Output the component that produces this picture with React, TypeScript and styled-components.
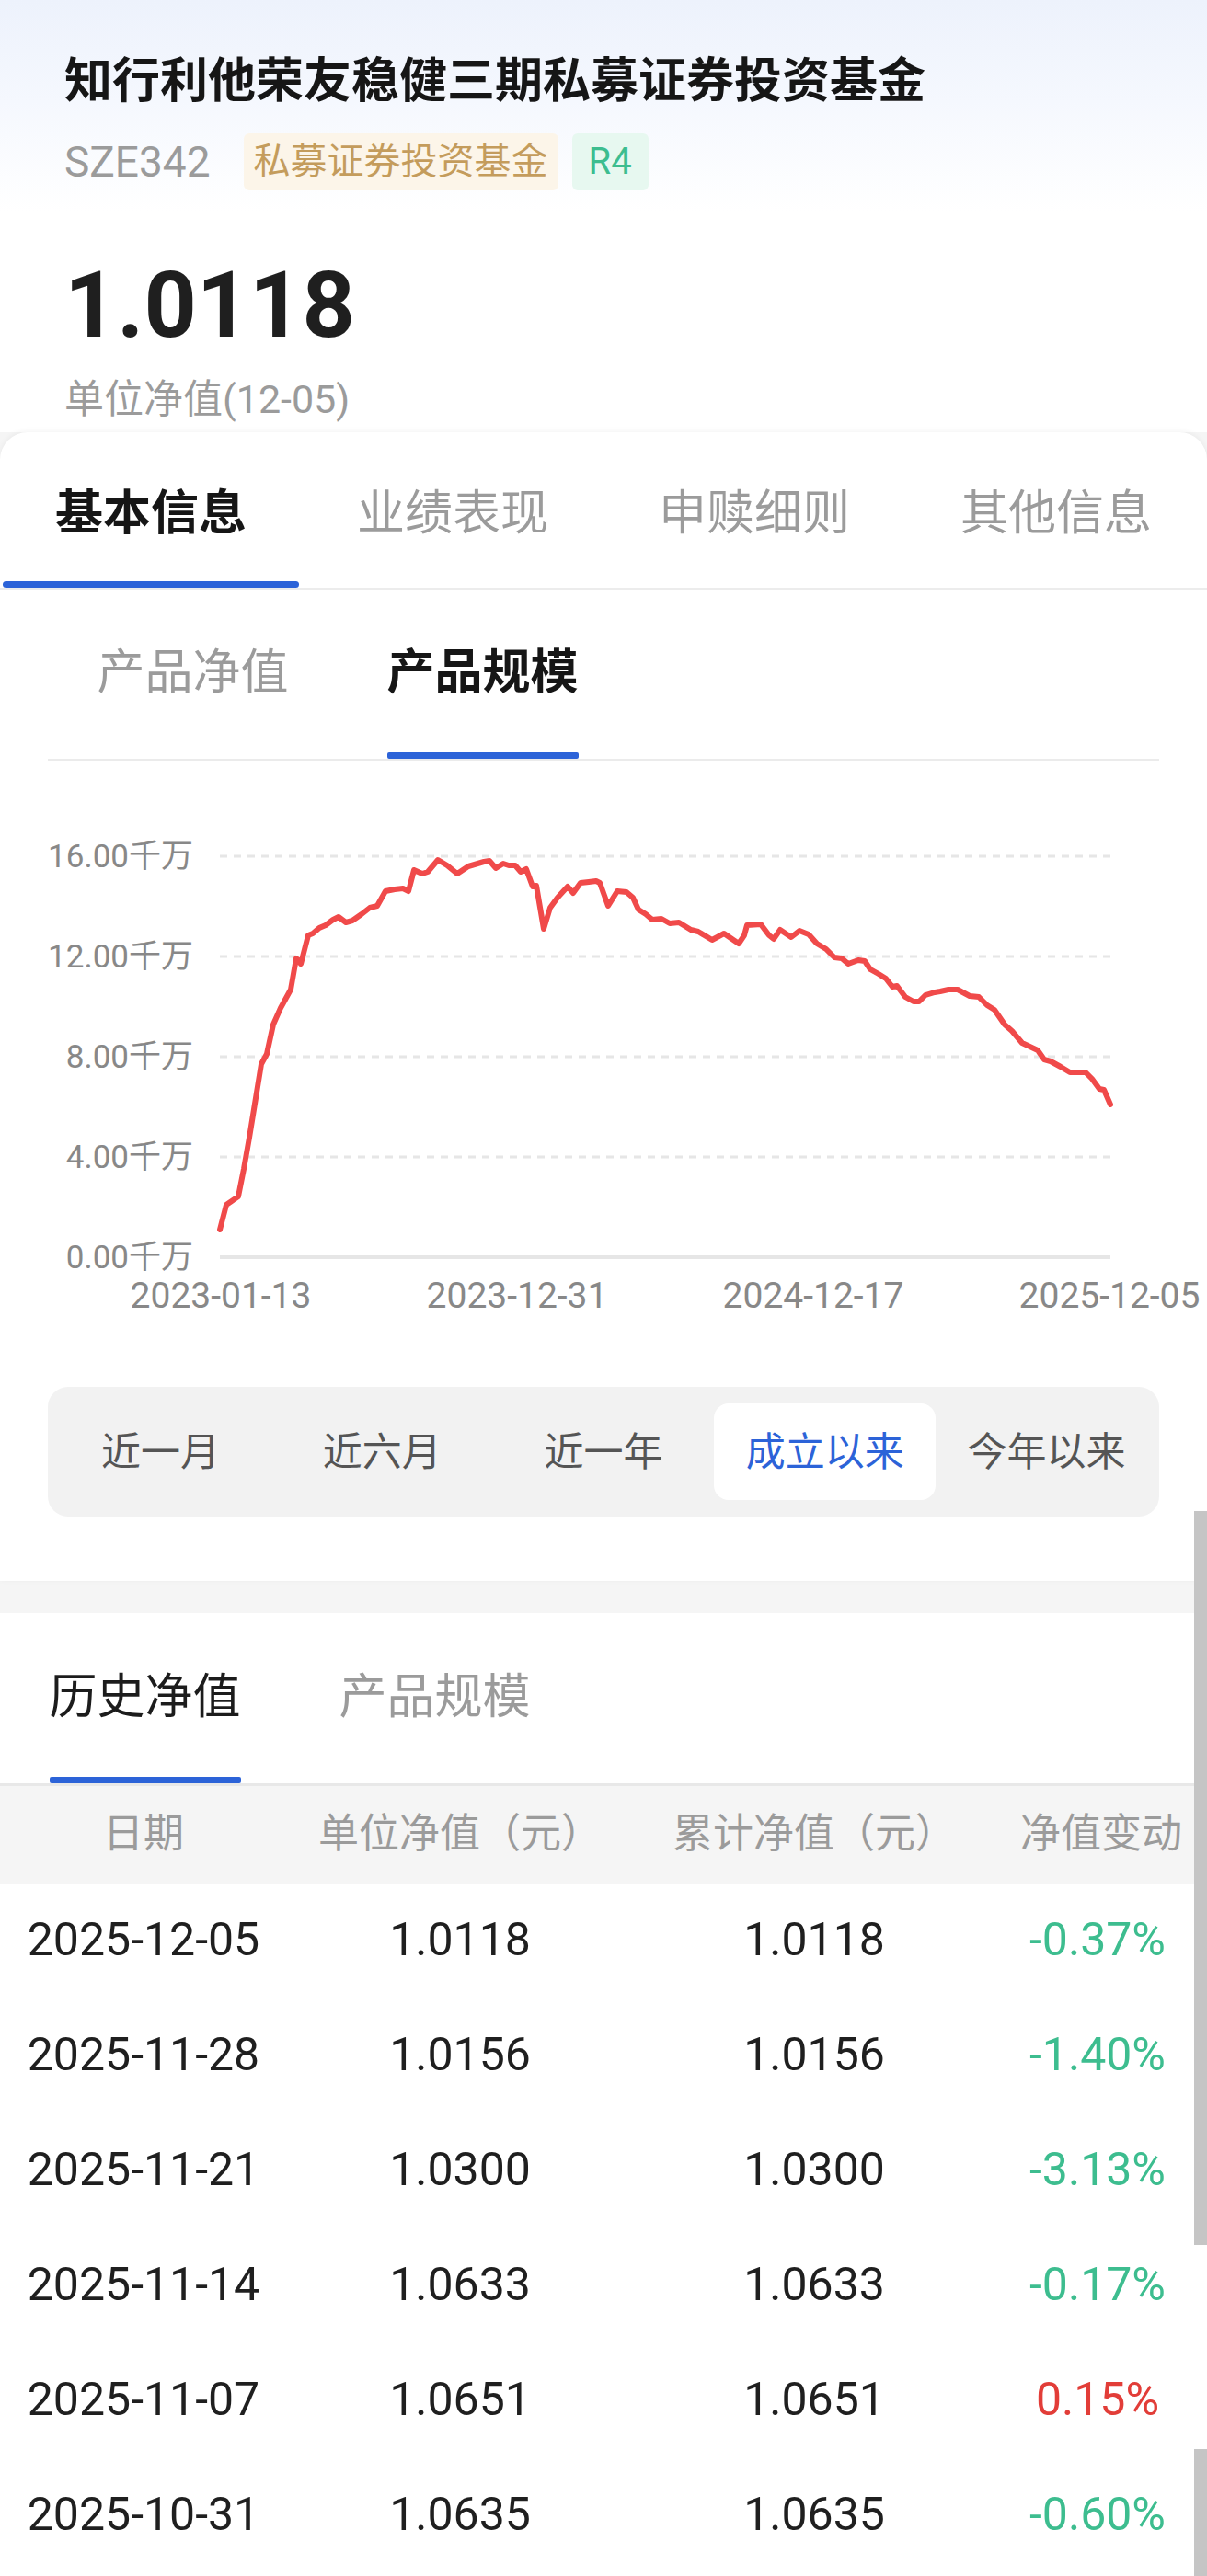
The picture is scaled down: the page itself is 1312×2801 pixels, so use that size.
import React, { FunctionComponent } from 'react';
import styled, { createGlobalStyle } from 'styled-components';

const BLUE = '#2c63d8';

const mainTabs = ['基本信息', '业绩表现', '申赎细则', '其他信息'];
const periods = ['近一月', '近六月', '近一年', '成立以来', '今年以来'];

const history = [
  { date: '2025-12-05', unit: '1.0118', total: '1.0118', change: '-0.37%' },
  { date: '2025-11-28', unit: '1.0156', total: '1.0156', change: '-1.40%' },
  { date: '2025-11-21', unit: '1.0300', total: '1.0300', change: '-3.13%' },
  { date: '2025-11-14', unit: '1.0633', total: '1.0633', change: '-0.17%' },
  { date: '2025-11-07', unit: '1.0651', total: '1.0651', change: '0.15%' },
  { date: '2025-10-31', unit: '1.0635', total: '1.0635', change: '-0.60%' },
];

// chart coords are page pixels, svg viewBox starts at y=827
const line = [
  [239, 1337], [246, 1310], [259, 1301], [265, 1271], [271, 1237], [278, 1194], [284, 1157],
  [290, 1146], [297, 1114], [305, 1096], [316, 1076], [322, 1042], [327, 1048], [335, 1017],
  [340, 1015], [347, 1009], [354, 1006], [362, 1000], [368, 997], [376, 1003], [383, 1001],
  [393, 994], [402, 987], [410, 985], [419, 969], [429, 967], [438, 966], [444, 969],
  [450, 946], [459, 950], [465, 948], [476, 935], [486, 941], [497, 950], [509, 942],
  [526, 937], [532, 936], [539, 944], [547, 939], [553, 941], [560, 941], [566, 948],
  [572, 945], [579, 964], [583, 963], [591, 1010], [598, 987], [606, 976], [617, 964],
  [623, 971], [631, 960], [640, 959], [648, 958], [652, 960], [661, 985], [671, 969],
  [681, 970], [688, 976], [694, 989], [702, 994], [709, 1000], [719, 999], [728, 1004],
  [738, 1003], [751, 1011], [759, 1013], [774, 1022], [787, 1015], [803, 1026], [809, 1017],
  [812, 1006], [827, 1005], [836, 1017], [841, 1021], [848, 1011], [860, 1019], [869, 1012],
  [879, 1016], [888, 1026], [898, 1032], [907, 1041], [915, 1042], [922, 1048], [933, 1044],
  [940, 1045], [946, 1054], [955, 1059], [963, 1064], [970, 1073], [975, 1072], [984, 1084],
  [993, 1089], [999, 1089], [1006, 1082], [1016, 1079], [1022, 1078], [1031, 1076],
  [1041, 1076], [1054, 1083], [1064, 1084], [1073, 1093], [1081, 1098], [1092, 1114],
  [1100, 1121], [1111, 1134], [1128, 1142], [1135, 1152], [1142, 1154], [1153, 1160],
  [1163, 1166], [1170, 1166], [1180, 1166], [1187, 1173], [1195, 1184], [1200, 1185],
  [1207, 1201],
];

const yTicks = [
  { y: 931, label: '16.00千万' },
  { y: 1040, label: '12.00千万' },
  { y: 1149, label: '8.00千万' },
  { y: 1258, label: '4.00千万' },
  { y: 1367, label: '0.00千万' },
];

const xTicks = [
  { x: 240, label: '2023-01-13' },
  { x: 562, label: '2023-12-31' },
  { x: 884, label: '2024-12-17' },
  { x: 1206, label: '2025-12-05' },
];

const ScaleChart: FunctionComponent = () => (
  <ChartSvg width={1312} height={620} viewBox="0 827 1312 620">
    {yTicks.map(t => (
      <g key={t.label}>
        <line
          x1={239}
          x2={1207}
          y1={t.y}
          y2={t.y}
          stroke="#e6e6e6"
          strokeWidth={t.y === 1367 ? 4 : 3}
          strokeDasharray={t.y === 1367 ? undefined : '8 7'}
        />
        <text x={210} y={t.y + 12} textAnchor="end" className="ylabel">
          {t.label}
        </text>
      </g>
    ))}
    {xTicks.map(t => (
      <text key={t.label} x={t.x} y={1422} textAnchor="middle" className="xlabel">
        {t.label}
      </text>
    ))}
    <polyline
      points={line.map(p => p.join(',')).join(' ')}
      fill="none"
      stroke="#f04a4a"
      strokeWidth={6}
      strokeLinejoin="round"
      strokeLinecap="round"
    />
  </ChartSvg>
);

const App: FunctionComponent = () => (
  <Page>
    <GlobalStyle />
    <Header>
      <Title>知行利他荣友稳健三期私募证券投资基金</Title>
      <TagRow>
        <Code>SZE342</Code>
        <Tag $bg="#fcf5e9" $color="#c49c5c" $pad={11}>私募证券投资基金</Tag>
        <Tag $bg="#e7f8f0" $color="#3dbd8f" $pad={18}>R4</Tag>
      </TagRow>
      <NavValue>1.0118</NavValue>
      <NavLabel>单位净值(12-05)</NavLabel>
    </Header>

    <Card>
      <MainTabs>
        {mainTabs.map((t, i) => (
          <MainTab key={t} $active={i === 0}>
            <span>{t}</span>
            <MainBar $active={i === 0} />
          </MainTab>
        ))}
      </MainTabs>

      <SubTabs>
        <SubTab $active={false}>
          <span>产品净值</span>
          <SubBar $active={false} />
        </SubTab>
        <SubTab $active>
          <span>产品规模</span>
          <SubBar $active />
        </SubTab>
      </SubTabs>

      <ScaleChart />

      <PeriodBar>
        {periods.map(p => (
          <PeriodItem key={p} $active={p === '成立以来'}>
            {p}
          </PeriodItem>
        ))}
      </PeriodBar>
    </Card>

    <HistoryCard>
      <HistoryTabs>
        <HistoryTab $active>
          <span>历史净值</span>
          <SubBar $active />
        </HistoryTab>
        <HistoryTab $active={false}>
          <span>产品规模</span>
          <SubBar $active={false} />
        </HistoryTab>
      </HistoryTabs>
      <TableHead>
        <div>日期</div>
        <div>单位净值（元）</div>
        <div>累计净值（元）</div>
        <div>净值变动</div>
      </TableHead>
      {history.map(r => (
        <TableRow key={r.date}>
          <div>{r.date}</div>
          <div>{r.unit}</div>
          <div>{r.total}</div>
          <Change $up={!r.change.startsWith('-')}>{r.change}</Change>
        </TableRow>
      ))}
    </HistoryCard>

    <ScrollThumb $top={1643} $height={798} />
    <ScrollThumb $top={2663} $height={140} />
  </Page>
);

const GlobalStyle = createGlobalStyle`
  html, body {
    margin: 0;
    padding: 0;
    background: #f5f5f5;
  }
  body {
    font-family: Roboto, "Noto Sans CJK SC", sans-serif;
    -webkit-font-smoothing: antialiased;
  }
  * {
    box-sizing: border-box;
  }
`;

const Page = styled.div`
  position: relative;
  width: 1312px;
  min-height: 2801px;
  overflow: hidden;
  background: #f5f5f5;
`;

const Header = styled.div`
  padding: 53px 0 8px 70px;
  background: linear-gradient(180deg, #edf2fc 0%, #f5f8fe 110px, #ffffff 230px);
`;

const Title = styled.h1`
  margin: 0;
  font-size: 52px;
  line-height: 72px;
  font-weight: 700;
  color: #161616;
`;

const TagRow = styled.div`
  display: flex;
  align-items: center;
  gap: 15px;
  height: 62px;
  margin-top: 20px;
`;

const Code = styled.span`
  font-size: 46px;
  color: #9b9b9b;
  margin-right: 21px;
`;

const Tag = styled.span<{ $bg: string; $color: string; $pad: number }>`
  height: 62px;
  line-height: 62px;
  padding: 0 ${p => p.$pad}px;
  border-radius: 6px;
  font-size: 40px;
  background: ${p => p.$bg};
  color: ${p => p.$color};
`;

const NavValue = styled.div`
  margin-top: 65px;
  font-size: 100px;
  line-height: 120px;
  font-weight: 700;
  color: #1f1f1f;
`;

const NavLabel = styled.div`
  margin-top: 14px;
  font-size: 43px;
  line-height: 56px;
  color: #9b9b9b;
`;

const Card = styled.div`
  background: #fff;
  border-radius: 30px 30px 0 0;
  box-shadow: 0 -1px 6px rgba(0, 0, 0, 0.05);
  padding-bottom: 70px;
`;

const MainTabs = styled.div`
  display: grid;
  grid-template-columns: repeat(4, 1fr);
  border-bottom: 2px solid #ececec;
`;

const MainTab = styled.div<{ $active: boolean }>`
  display: flex;
  flex-direction: column;
  align-items: center;
  padding-top: 53px;
  font-size: 52px;
  line-height: 72px;
  font-weight: ${p => (p.$active ? 700 : 400)};
  color: ${p => (p.$active ? '#161616' : '#9b9b9b')};
`;

const MainBar = styled.div<{ $active: boolean }>`
  width: calc(100% - 6px);
  height: 7px;
  margin-top: 37px;
  border-radius: 4px;
  background: ${p => (p.$active ? BLUE : 'transparent')};
`;

const SubTabs = styled.div`
  display: flex;
  margin: 0 52px;
  border-bottom: 2px solid #ebebeb;
`;

const SubTab = styled.div<{ $active: boolean }>`
  width: 315px;
  display: flex;
  flex-direction: column;
  align-items: center;
  padding-top: 55px;
  font-size: 52px;
  line-height: 72px;
  font-weight: ${p => (p.$active ? 700 : 400)};
  color: ${p => (p.$active ? '#161616' : '#9b9b9b')};
  span {
    display: block;
  }
`;

const SubBar = styled.div<{ $active: boolean }>`
  width: 4em;
  height: 7px;
  margin-top: 50px;
  border-radius: 2px;
  background: ${p => (p.$active ? BLUE : 'transparent')};
`;

const ChartSvg = styled.svg`
  display: block;
  .ylabel {
    font-family: Roboto, "Noto Sans CJK SC", sans-serif;
    font-size: 35px;
    fill: #888;
  }
  .xlabel {
    font-family: Roboto, "Noto Sans CJK SC", sans-serif;
    font-size: 39px;
    fill: #888;
  }
`;

const PeriodBar = styled.div`
  display: grid;
  grid-template-columns: repeat(5, 1fr);
  margin: 61px 52px 0;
  padding: 18px 2px;
  background: #f2f2f2;
  border-radius: 22px;
`;

const PeriodItem = styled.div<{ $active: boolean }>`
  height: 105px;
  display: flex;
  align-items: center;
  justify-content: center;
  padding-bottom: 8px;
  border-radius: 16px;
  font-size: 43px;
  color: ${p => (p.$active ? BLUE : '#555')};
  background: ${p => (p.$active ? '#fff' : 'transparent')};
`;

const HistoryCard = styled.div`
  margin-top: 35px;
  background: #fff;
  min-height: 1100px;
`;

const HistoryTabs = styled.div`
  display: flex;
  border-bottom: 3px solid #e8e8e8;
`;

const HistoryTab = styled.div<{ $active: boolean }>`
  width: 315px;
  display: flex;
  flex-direction: column;
  align-items: center;
  padding-top: 56px;
  font-size: 52px;
  line-height: 72px;
  color: ${p => (p.$active ? '#1c1c1c' : '#9b9b9b')};
`;

const TableHead = styled.div`
  display: grid;
  grid-template-columns: 312px 376px 394px 230px;
  align-items: center;
  height: 107px;
  padding-bottom: 12px;
  background: #f5f5f5;
  font-size: 44px;
  color: #9b9b9b;
  text-align: center;
`;

const TableRow = styled.div`
  display: grid;
  grid-template-columns: 312px 376px 394px 222px;
  align-items: center;
  height: 125px;
  padding-bottom: 6px;
  font-size: 50px;
  color: #1f1f1f;
  text-align: center;
`;

const Change = styled.div<{ $up: boolean }>`
  color: ${p => (p.$up ? '#e23d38' : '#3dbd8f')};
`;

const ScrollThumb = styled.div<{ $top: number; $height: number }>`
  position: absolute;
  right: 0;
  top: ${p => p.$top}px;
  width: 14px;
  height: ${p => p.$height}px;
  background: #c5c5c5;
`;

export default App;
